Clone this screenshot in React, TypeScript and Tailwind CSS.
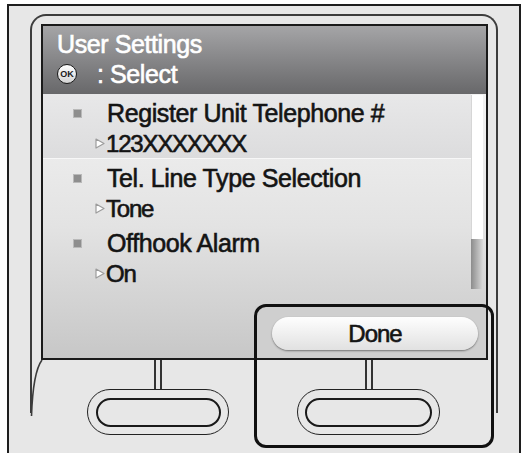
import React from "react";

// rows of the settings list
const rows = [
  { label: "Register Unit Telephone #", value: "123XXXXXXX", active: true },
  { label: "Tel. Line Type Selection", value: "Tone", active: false },
  { label: "Offhook Alarm", value: "On", active: false },
];

function Triangle() {
  return (
    <svg width="10" height="11" viewBox="0 0 10 11" className="shrink-0">
      <path d="M1 1 L9 5.5 L1 10 Z" fill="#ffffff" stroke="#9c9c9c" strokeWidth="1.2" strokeLinejoin="round" />
    </svg>
  );
}

function HardButton({ width, inner }: { width: string; inner: string }) {
  return (
    <div className={`flex flex-col items-center ${width}`}>
      <div className="w-[8px] h-[29px] border-x-2 border-[#333]" />
      <div className="w-full h-[46px] rounded-full border border-[#222] flex items-center justify-center">
        <div className={`${inner} h-[29px] rounded-full border-2 border-[#1a1a1a]`} />
      </div>
    </div>
  );
}

export default function App() {
  return (
    <div
      className="relative w-[523px] h-[453px] bg-white overflow-hidden [-webkit-text-stroke:0.6px_currentColor]"
      style={{ fontFamily: '"Liberation Sans", Arial, sans-serif' }}
    >
      {/* outer device frame */}
      <div className="ml-[7px] mt-[4px] w-[514px] h-[449px] border-2 border-b-0 border-[#1e1e1e] bg-[#e7e7e7] pt-[8px] px-[21px]">
        {/* bezel */}
        <div className="relative h-[399px] border-2 border-b-0 border-[#3c3c3c] rounded-t-[16px]">
          {/* screen */}
          <div className="ml-[9px] mt-[8px] w-[447px] h-[336px] border-2 border-[#1a1a1a] flex flex-col">
            {/* header */}
            <div className="h-[68px] bg-gradient-to-b from-[#a5a5a7] to-[#68686a] pl-[14px] pt-[3px] text-white text-[25px] leading-[30px] tracking-[-0.4px]">
              <div className="h-[30px]">User Settings</div>
              <div className="h-[30px] flex items-center">
                <span className="w-[20px] h-[20px] rounded-full border-[1.5px] border-[#1a1a1a] bg-gradient-to-b from-white to-[#d4d4d4] flex items-center justify-center text-[9px] font-bold text-[#1a1a1a] tracking-normal leading-none [-webkit-text-stroke:0px]">
                  OK
                </span>
                <span className="ml-[20px]">: Select</span>
              </div>
            </div>

            {/* body */}
            <div className="flex-1 flex flex-col bg-gradient-to-b from-[#f2f2f2] via-[#e3e3e3] to-[#c7c7c7]">
              <div className="flex-1 flex">
                <div className="w-[428px] flex flex-col">
                  {rows.map((r) => (
                    <div
                      key={r.label}
                      className={`h-[65px] pt-[4px] text-[#141414] ${
                        r.active ? "bg-gradient-to-b from-[#e8e8e9] to-[#dcdcdd] border-b border-[#f7f7f7]" : ""
                      }`}
                    >
                      <div className="h-[30px] pl-[30px] flex items-center">
                        <span className="w-[9px] h-[9px] bg-[#8e8e8e] border border-[#b9b9b9] shrink-0" />
                        <span className="ml-[25px] text-[25px] leading-[30px] tracking-[-0.4px]">{r.label}</span>
                      </div>
                      <div className="h-[31px] pl-[52px] flex items-center">
                        <Triangle />
                        <span className="ml-[1px] text-[24px] leading-[30px] tracking-[-1.2px]">{r.value}</span>
                      </div>
                    </div>
                  ))}
                </div>
                {/* scrollbar */}
                <div className="w-[12px] flex flex-col pt-[1px]">
                  <div className="h-[144px] bg-white border-l border-[#d6d6d6]" />
                  <div className="h-[50px] bg-gradient-to-r from-[#8c8c8c] to-[#dadada]" />
                </div>
              </div>

              {/* footer */}
              <div className="h-[52px] flex justify-end">
                <div className="w-[231px] h-full bg-[#cfcfcf] pl-[17px] pr-[8px] pt-[11px]">
                  <div className="h-[33px] rounded-full bg-gradient-to-b from-[#fefefe] to-[#e1e1e1] shadow-[0_1px_2px_rgba(0,0,0,0.45)] flex items-center justify-center text-[24px] tracking-[-1px] text-[#141414]">
                    Done
                  </div>
                </div>
              </div>
            </div>
          </div>

          {/* hardware buttons */}
          <div className="flex">
            <div className="ml-[55px]">
              <HardButton width="w-[142px]" inner="w-[125px]" />
            </div>
            <div className="ml-[68px]">
              <HardButton width="w-[143px]" inner="w-[127px]" />
            </div>
          </div>

          {/* curved lower edge of the bezel */}
          <svg width="14" height="60" viewBox="0 0 14 60" className="absolute left-[-2px] top-[342px]">
            <path d="M12 2 Q3 14 1.5 58" fill="none" stroke="#3c3c3c" strokeWidth="1.6" />
          </svg>
        </div>
      </div>

      {/* highlight around Done and its key */}
      <div className="absolute left-[254px] top-[304px] w-[240px] h-[144px] border-[3px] border-[#111] rounded-[12px]" />
    </div>
  );
}
